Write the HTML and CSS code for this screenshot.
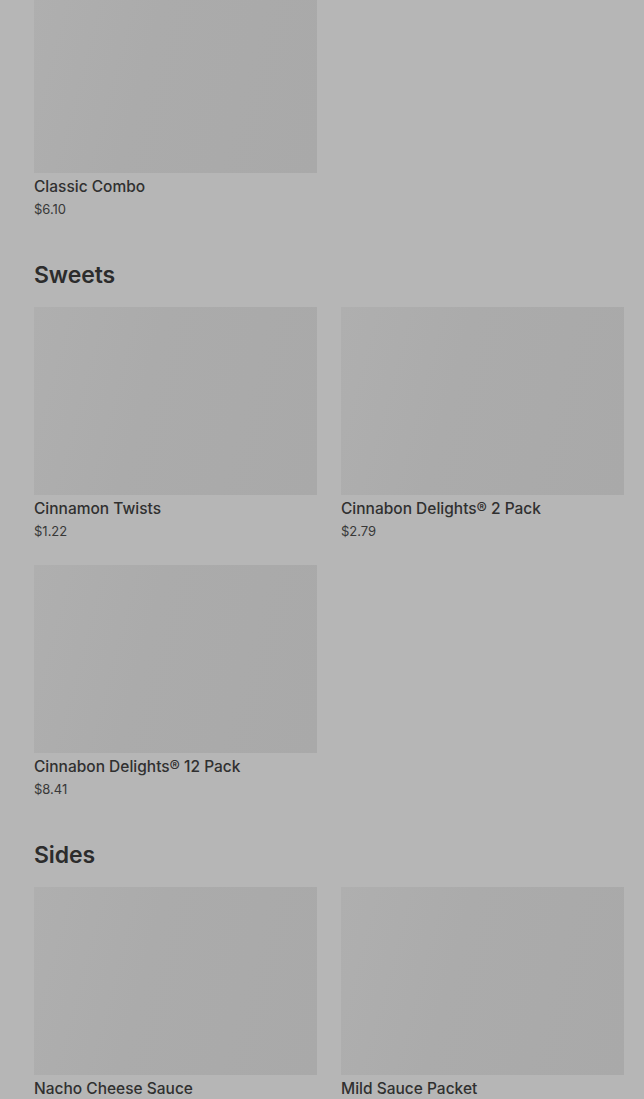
FILE: index.html
```html
<!DOCTYPE html>
<html lang="en">
<head>
  <meta charset="UTF-8">
  <title>Menu</title>
  <meta name="viewport" content="width=device-width, initial-scale=1.0">
  <link rel="stylesheet" href="styles.css">
</head>
<body>

<main class="menu">
  <section class="category">
    <div class="grid">
      <div class="item">
        <div class="thumb"></div>
        <p class="name">Classic Combo</p>
        <p class="price">$6.10</p>
      </div>
    </div>
  </section>

  <section class="category">
    <h2>Sweets</h2>
    <div class="grid">
      <div class="item">
        <div class="thumb"></div>
        <p class="name">Cinnamon Twists</p>
        <p class="price">$1.22</p>
      </div>
      <div class="item">
        <div class="thumb"></div>
        <p class="name">Cinnabon Delights® 2 Pack</p>
        <p class="price">$2.79</p>
      </div>
      <div class="item">
        <div class="thumb"></div>
        <p class="name">Cinnabon Delights® 12 Pack</p>
        <p class="price">$8.41</p>
      </div>
    </div>
  </section>

  <section class="category">
    <h2>Sides</h2>
    <div class="grid">
      <div class="item">
        <div class="thumb"></div>
        <p class="name">Nacho Cheese Sauce</p>
        <p class="price">$0.75</p>
      </div>
      <div class="item">
        <div class="thumb"></div>
        <p class="name">Mild Sauce Packet</p>
        <p class="price">$0.00</p>
      </div>
    </div>
  </section>
</main>

</body>
</html>
```

FILE: styles.css
```css
body { margin: 0; background: #b6b6b6; font-family: Inter, "Noto Sans", sans-serif; color: #303030; overflow: hidden; }
.menu { padding: 0 20px 0 34px; margin-top: -15px; display: flex; flex-direction: column; gap: 42px; }
.category h2 { margin: 0 0 18px; font-size: 23px; line-height: 28px; font-weight: 600; color: #2c2c2c; letter-spacing: -0.1px; }
.grid { display: grid; grid-template-columns: 1fr 1fr; gap: 24px; }
.thumb { height: 188px; background: linear-gradient(105deg, #afafaf 0%, #ababab 40%, #a9a9a9 100%); }
.name { margin: 4px 0 0; font-size: 15.5px; line-height: 20px; font-weight: 500; }
.price { margin: 2px 0 0; font-size: 13px; line-height: 20px; color: #383838; }
```
